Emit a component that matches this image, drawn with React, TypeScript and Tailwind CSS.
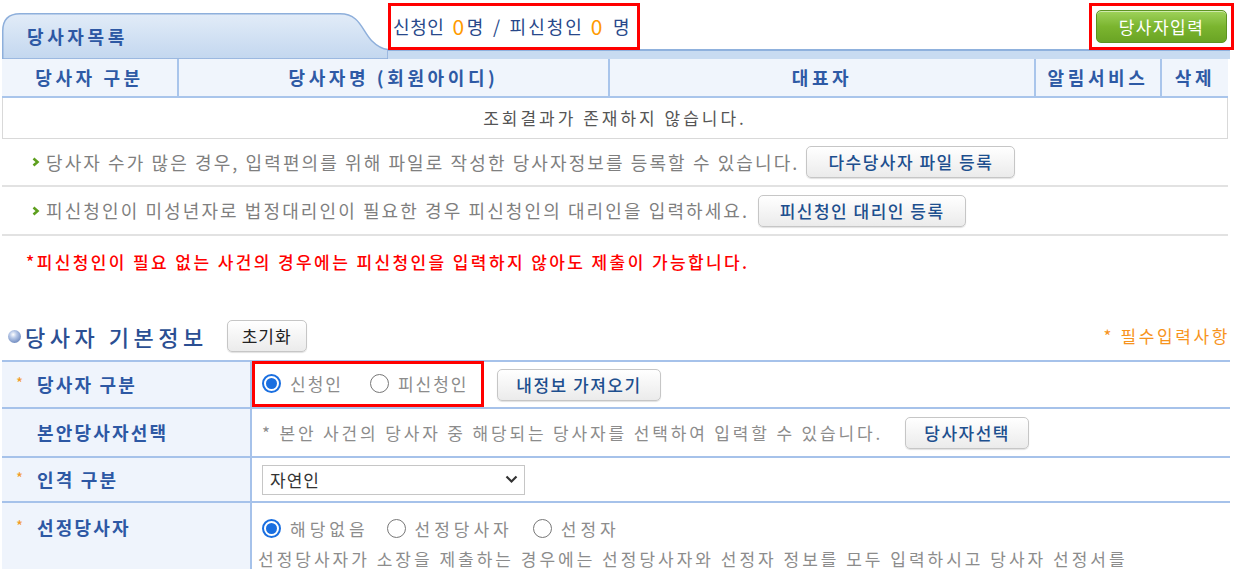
import clsx from "clsx";

const font = "font-['Noto_Sans_CJK_KR','Noto_Sans',sans-serif]";

const Radio = ({ checked, label, gap = "mr-[23px]", track = "tracking-[2px]" }: { checked?: boolean; label: string; gap?: string; track?: string }) => (
    <span className={clsx("flex items-center gap-[9px]", gap)}>
        <span className={clsx("w-[19px] h-[19px] rounded-full flex items-center justify-center bg-white",
            checked ? "border-2 border-[#1a6fe0]" : "border-[1.5px] border-[#777]")}>
            {checked && <span className="w-[11px] h-[11px] rounded-full bg-[#1a6fe0]" />}
        </span>
        <span className={clsx("text-[#8c8c8c] text-[17px]", track)}>{label}</span>
    </span>
);

const Btn = ({ children, className }: { children: string; className?: string }) => (
    <button className={clsx("h-[32px] rounded-[5px] border border-[#c6c6c6] bg-gradient-to-b from-white to-[#ebebeb] text-[#1d4f8e] text-[17px] font-medium tracking-[1.5px] shadow-[0_1px_1px_rgba(0,0,0,0.12)] whitespace-nowrap", className)}>
        {children}
    </button>
);

const Chevron = () => (
    <svg width="8" height="10" viewBox="0 0 8 10" className="mr-[6px] shrink-0">
        <path d="M1.5 1.5 L5.5 5 L1.5 8.5" stroke="#5d9f1e" strokeWidth="2.6" fill="none" />
    </svg>
);

const Label = ({ text, star = true, top }: { text: string; star?: boolean; top?: boolean }) => (
    <div className={clsx("bg-[#eff4fc] border-r-2 border-[#a6c2ea] flex pl-[2px]", top ? "items-start pt-[11px]" : "items-center")}>
        <span className="flex items-center">
            {star
                ? <span className="text-[#f39a1e] text-[15px] w-[33px] pl-[12px] -mt-[3px]">*</span>
                : <span className="w-[33px]" />}
            <span className="text-[#2d58a4] font-bold text-[18px] tracking-[2.2px]">{text}</span>
        </span>
    </div>
);

const App = () => {
    const headers = [
        { t: "당사자 구분", w: "w-[177px]" },
        { t: "당사자명 (회원아이디)", w: "w-[431px]" },
        { t: "대표자", w: "w-[426px]" },
        { t: "알림서비스", w: "w-[126px]" },
        { t: "삭제", w: "w-[66px]" },
    ];

    return <div className={clsx("w-[1238px] h-[569px] overflow-hidden bg-white pl-[2px]", font)}>
        {/* top tab row */}
        <div className="flex h-[49px] w-[1232px]">
            <div className="relative z-10 self-end w-[386px] h-[46px] -mb-[10px] shrink-0">
                <svg width="386" height="46" viewBox="0 0 386 46" className="absolute inset-0">
                    <defs>
                        <linearGradient id="tabg" x1="0" y1="0" x2="0" y2="1">
                            <stop offset="0" stopColor="#e2ecf8" />
                            <stop offset="1" stopColor="#c3d7ef" />
                        </linearGradient>
                    </defs>
                    <path d="M0.75 46 V18 Q0.75 0.75 18 0.75 H338 C358 0.75 360 18 370 28 C375 33 380 36 386 36.5 V46 Z"
                        fill="url(#tabg)" stroke="#8eafdb" strokeWidth="1.5" />
                </svg>
                <span className="relative block pl-[25px] pt-[10px] text-[#2d58a4] font-bold text-[18px] tracking-[3.6px]">당사자목록</span>
            </div>
            <div className="mt-[3px] h-[47px] w-[252px] border-[3px] border-[#ff0000] flex items-center pl-[2px] text-[18px] text-[#28488a] tracking-[0.6px] whitespace-nowrap">
                <span>신청인</span>
                <span className="text-[#ff9a00] text-[21px] ml-[8px]">0</span>
                <span className="ml-[2px]">명</span>
                <span className="mx-[9px]">/</span>
                <span className="tracking-[2px]">피신청인</span>
                <span className="text-[#ff9a00] text-[21px] ml-[7px]">0</span>
                <span className="ml-[10px]">명</span>
            </div>
            <div className="flex-1" />
            <div className="mt-[3px] h-[47px] w-[145px] border-[3px] border-[#ff0000] flex items-center justify-center">
                <button className="w-[131px] h-[33px] rounded-[5px] bg-gradient-to-b from-[#9fd35a] via-[#7bb52f] to-[#6aa424] border border-[#5c9420] text-white text-[17px] tracking-[1.5px] shadow-[inset_0_1px_0_rgba(255,255,255,0.5)]">당사자입력</button>
            </div>
        </div>
        <div className="w-[1228px] h-[10px] border-t-2 border-[#8fb1dd] bg-[#c8dbf1]" />

        {/* list table */}
        <div className="flex w-[1226px] h-[39px] bg-[#f0f5fc] border-b-2 border-[#a9c5eb]">
            {headers.map((h, i) => <div key={h.t} className={clsx(h.w, "flex items-center justify-center text-[#2e5aa5] font-bold text-[18px] tracking-[3.6px]", i < headers.length - 1 && "border-r-2 border-[#a9c5eb]")}>{h.t}</div>)}
        </div>
        <div className="w-[1226px] h-[41px] border border-t-0 border-[#d9d9d9] flex items-center justify-center text-[#555] text-[17px] tracking-[3px]">
            조회결과가 존재하지 않습니다.
        </div>

        <div className="w-[1226px] h-[48px] border-b-2 border-[#e2e2e2] flex items-center pl-[30px] text-[#7f7f7f] text-[18px] tracking-[2.1px] whitespace-nowrap">
            <Chevron />당사자 수가 많은 경우, 입력편의를 위해 파일로 작성한 당사자정보를 등록할 수 있습니다.
            <Btn className="ml-[7px] w-[209px]">다수당사자 파일 등록</Btn>
        </div>
        <div className="w-[1226px] h-[49px] border-b-2 border-[#e2e2e2] flex items-center pl-[30px] text-[#7f7f7f] text-[18px] tracking-[2.1px] whitespace-nowrap">
            <Chevron />피신청인이 미성년자로 법정대리인이 필요한 경우 피신청인의 대리인을 입력하세요.
            <Btn className="ml-[9px] w-[208px]">피신청인 대리인 등록</Btn>
        </div>
        <div className="h-[52px] flex items-center pl-[24px] text-[#ff0000] text-[17px] font-medium tracking-[2.4px] whitespace-nowrap">
            *피신청인이 필요 없는 사건의 경우에는 피신청인을 입력하지 않아도 제출이 가능합니다.
        </div>

        {/* basic info */}
        <div className="mt-[33px] h-[30px] w-[1228px] flex items-center">
            <span className="ml-[6px] mr-[4px] w-[13px] h-[13px] rounded-full bg-[radial-gradient(circle_at_40%_35%,#ffffff_0%,#b8c9e8_30%,#4b6cab_100%)]" />
            <span className="text-[#2b4f93] text-[22px] font-medium tracking-[4.5px]">당사자 기본정보</span>
            <Btn className="ml-[19px] w-[80px] h-[29px] rounded-[3px] border-[#8c9fc0] font-normal text-[#222] tracking-[1px]">초기화</Btn>
            <span className="ml-auto text-[#f7941d] text-[17px] tracking-[2.6px]">* 필수입력사항</span>
        </div>

        <div className="mt-[9px] w-[1228px] border-t-2 border-[#a6c2ea]">
            <div className="grid grid-cols-[250px_1fr] h-[47px] border-b-2 border-[#a6c2ea]">
                <Label text="당사자 구분" />
                <div className="flex items-center">
                    <div className="w-[232px] h-[46px] -mt-[2px] border-[3px] border-[#ff0000] flex items-center pl-[7px]">
                        <Radio checked label="신청인" gap="mr-[27px]" />
                        <Radio label="피신청인" gap="" />
                    </div>
                    <Btn className="ml-[13px] w-[164px]">내정보 가져오기</Btn>
                </div>
            </div>
            <div className="grid grid-cols-[250px_1fr] h-[49px] border-b-2 border-[#a6c2ea]">
                <Label text="본안당사자선택" star={false} />
                <div className="flex items-center pl-[10px] text-[#8c8c8c] text-[17px] tracking-[2.85px] whitespace-nowrap">
                    * 본안 사건의 당사자 중 해당되는 당사자를 선택하여 입력할 수 있습니다.
                    <Btn className="ml-[22px] w-[124px]">당사자선택</Btn>
                </div>
            </div>
            <div className="grid grid-cols-[250px_1fr] h-[45px] border-b-2 border-[#a6c2ea]">
                <Label text="인격 구분" />
                <div className="flex items-center pl-[10px]">
                    <div className="w-[263px] h-[30px] border border-[#c6c6c6] flex items-center justify-between pl-[7px] pr-[6px] text-[#333] text-[17px] tracking-[1px]">
                        자연인
                        <svg width="13" height="9" viewBox="0 0 13 9">
                            <path d="M1.5 1.5 L6.5 6.5 L11.5 1.5" stroke="#333" strokeWidth="2.2" fill="none" />
                        </svg>
                    </div>
                </div>
            </div>
            <div className="grid grid-cols-[250px_1fr] h-[80px]">
                <Label text="선정당사자" top />
                <div className="pl-[10px] pt-[13px]">
                    <div className="flex items-center">
                        <Radio checked label="해당없음" gap="mr-[18px]" track="tracking-[4px]" />
                        <Radio label="선정당사자" gap="mr-[20px]" track="tracking-[4px]" />
                        <Radio label="선정자" gap="" track="tracking-[4px]" />
                    </div>
                    <div className="mt-[4px] -ml-[4px] text-[#8c8c8c] text-[17px] tracking-[3px] whitespace-nowrap">
                        선정당사자가 소장을 제출하는 경우에는 선정당사자와 선정자 정보를 모두 입력하시고 당사자 선정서를
                    </div>
                </div>
            </div>
        </div>
    </div>
}

export default App;
